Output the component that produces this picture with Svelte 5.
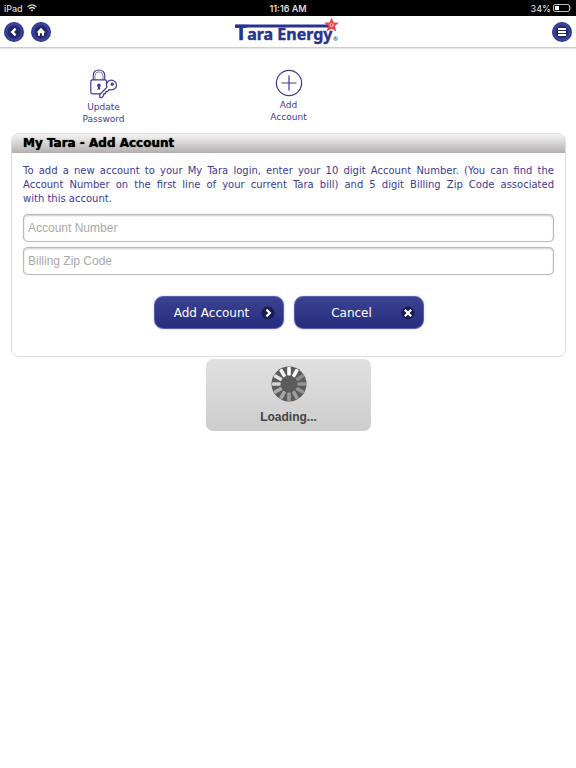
<script lang="ts">
    let accountNumber = $state('');
    let zipCode = $state('');

    // spinner bars, clockwise from the top
    const bars = [1, 1, 0.3, 0.35, 0.35, 0.4, 0.4, 0.45, 0.5, 0.75, 0.85, 0.95];

    function handleSubmit(e: SubmitEvent) {
        e.preventDefault();
    }
</script>

<div class="status-bar">
    <div class="status-left">
        <span>iPad</span>
        <svg width="10" height="8" viewBox="0 0 10 8" fill="none" stroke="#ddd" stroke-width="1.2">
            <path d="M0.6 3 Q5 -1.2 9.4 3" />
            <path d="M2.2 4.8 Q5 2.2 7.8 4.8" />
            <path d="M3.6 6 L5 7.6 L6.4 6 Q5 5 3.6 6Z" fill="#ddd" stroke="none" />
        </svg>
    </div>
    <span class="status-time">11:16 AM</span>
    <div class="status-right">
        <span>34%</span>
        <svg width="19" height="8" viewBox="0 0 19 8">
            <rect x="0.5" y="0.5" width="16" height="7" rx="1.5" fill="none" stroke="#bbb" />
            <rect x="2" y="2" width="4" height="4" fill="#fff" />
            <path d="M17.5 2.5 Q19 4 17.5 5.5Z" fill="#bbb" />
        </svg>
    </div>
</div>

<header class="header">
    <div class="header-side">
        <button class="round-btn" aria-label="Back">
            <svg width="20" height="20" viewBox="0 0 20 20">
                <path d="M11.6 6.6 L8.3 10 L11.6 13.4" fill="none" stroke="#fff" stroke-width="2.4" />
            </svg>
        </button>
        <button class="round-btn" aria-label="Home">
            <svg width="20" height="20" viewBox="0 0 20 20" fill="#fff">
                <path d="M10 5.8 L14.5 10.4 H13 V13.8 H11 V11.2 H9 V13.8 H7 V10.4 H5.5Z" />
            </svg>
        </button>
    </div>
    <a class="logo" href="#home" aria-label="Tara Energy">
        <svg width="106" height="28" viewBox="0 0 106 28">
            <rect x="0" y="6.5" width="93" height="3" fill="#27348b" />
            <text x="0" y="21.5" fill="#27348b" stroke="#27348b" stroke-width="0.4"><tspan class="logo-cap">T</tspan>ara Energy</text>
            <text class="logo-mark" x="98" y="23" fill="#27348b">®</text>
            <path d="M96.7 -0.3 L98.6 4.4 L103.8 4.7 L99.9 8.1 L101.3 13.6 L96.6 10.8 L91.6 13.4 L93.1 8.1 L89.2 4.6 L94.5 4.4Z" fill="#e4434b" />
            <circle cx="96.6" cy="7" r="1.6" fill="none" stroke="#fbd5d7" stroke-width="0.9" />
        </svg>
    </a>
    <div class="header-side end">
        <button class="round-btn" aria-label="Menu">
            <svg width="20" height="20" viewBox="0 0 20 20" fill="#fff">
                <rect x="6" y="6" width="8" height="2" />
                <rect x="6" y="9" width="8" height="2" />
                <rect x="6" y="12" width="8" height="2" />
            </svg>
        </button>
    </div>
</header>

<main>
    <nav class="shortcuts">
        <a href="#password">
            <svg width="28" height="30" viewBox="0 0 28 30" fill="none" stroke="#3d3a96" stroke-width="1.2">
                <path d="M3.2 11 V7 Q3.2 1 9 1 Q14.8 1 14.8 7 V11" />
                <path d="M5 11 V7.2 Q5 3 9 3 Q13 3 13 7.2 V11" stroke-width="0.7" />
                <path d="M16.6 15 V12.6 Q16.6 10.8 14.8 10.8 H2.6 Q0.8 10.8 0.8 12.6 V23 Q0.8 24.8 2.6 24.8 H10.4" />
                <path d="M7.4 20.5 L8.2 17.6 H9.6 L10.4 20.5Z" fill="#3d3a96" stroke="none" />
                <circle cx="8.9" cy="16.4" r="1.8" fill="#3d3a96" stroke="none" />
                <path d="M17 18.2 Q15.4 14.2 18.6 12 Q22 10 25 12.6 Q27.8 16 25.4 19.2 Q22.8 21.8 19.2 20.6 L17.6 22.4 L15.8 22.6 L15.6 24.4 L13.8 24.8 L13.6 26.6 L11.8 28.6 L9.8 28.4 L9.8 25.6Z" />
                <circle cx="22.2" cy="15.2" r="1.6" fill="#3d3a96" stroke="none" />
            </svg>
            <span>Update<br />Password</span>
        </a>
        <a href="#account">
            <svg width="28" height="28" viewBox="0 0 28 28" fill="none" stroke="#3d3a96" stroke-width="1.2">
                <circle cx="14" cy="14" r="12.6" />
                <path d="M14 6.5 V21.5 M6.5 14 H21.5" />
            </svg>
            <span>Add<br />Account</span>
        </a>
    </nav>

    <section class="panel">
        <h1>My Tara - Add Account</h1>
        <form onsubmit={handleSubmit}>
            <p>
                To add a new account to your My Tara login, enter your 10 digit Account Number. (You can find the
                Account Number on the first line of your current Tara bill) and 5 digit Billing Zip Code associated
                <span class="keep">with this account.</span>
            </p>
            <input type="text" placeholder="Account Number" aria-label="Account Number" bind:value={accountNumber} />
            <input type="text" placeholder="Billing Zip Code" aria-label="Billing Zip Code" bind:value={zipCode} />
            <div class="actions">
                <button class="action-btn" type="submit">
                    <span>Add Account</span>
                    <svg width="14" height="14" viewBox="0 0 14 14">
                        <circle cx="7" cy="7" r="6.5" fill="#191c50" />
                        <path d="M5.4 3.6 L8.8 7 L5.4 10.4" fill="none" stroke="#fff" stroke-width="2.2" />
                    </svg>
                </button>
                <button class="action-btn" type="button">
                    <span>Cancel</span>
                    <svg width="14" height="14" viewBox="0 0 14 14">
                        <circle cx="7" cy="7" r="6.5" fill="#191c50" />
                        <path d="M3.8 3.8 L10.2 10.2 M10.2 3.8 L3.8 10.2" stroke="#fff" stroke-width="2.2" />
                    </svg>
                </button>
            </div>
        </form>
    </section>

    <div class="loader" role="status">
        <svg width="36" height="36" viewBox="0 0 36 36">
            <circle cx="18" cy="18" r="17.5" fill="#5b5b5b" />
            {#each bars as opacity, i}
                <rect x="16.2" y="1" width="3.6" height="8.6" rx="1" fill="#fff" {opacity} transform="rotate({i * 30} 18 18)" />
            {/each}
        </svg>
        <span>Loading...</span>
    </div>
</main>

<style>
    :global(body) {
        background: #fff;
        font-family: Verdana, "DejaVu Sans", sans-serif;
        color: #3d3a96;
    }

    svg {
        display: block;
    }

    .status-bar {
        display: grid;
        grid-template-columns: 1fr auto 1fr;
        align-items: center;
        height: 16px;
        padding: 0 4px;
        box-sizing: border-box;
        background: #000;
        color: #ddd;
        font: 500 9px Inter, sans-serif;
    }

    .status-left,
    .status-right {
        display: flex;
        align-items: center;
        gap: 4px;
    }

    .status-right {
        justify-content: flex-end;
        gap: 2px;
    }

    .status-time {
        font-weight: 600;
    }

    .header {
        display: grid;
        grid-template-columns: 1fr auto 1fr;
        align-items: center;
        height: 32px;
        padding: 0 4px;
        box-sizing: border-box;
        border-bottom: 1px solid #ccc;
        box-shadow: 0 1px 1px #e8e8e8;
    }

    .header-side {
        display: flex;
        gap: 7px;
    }

    .header-side.end {
        justify-content: flex-end;
    }

    .round-btn {
        width: 20px;
        height: 20px;
        padding: 0;
        border: 0;
        border-radius: 50%;
        background: radial-gradient(circle, #20265f 0 5px, #2a3078 6px, #3d47ad 8px, #252b70 10px);
        cursor: pointer;
    }

    .logo text {
        font: 700 16px "Noto Sans", sans-serif;
    }

    .logo .logo-cap {
        font-size: 21px;
    }

    .logo .logo-mark {
        font-size: 6px;
    }

    main {
        padding: 21px 10px 0 11px;
    }

    .shortcuts {
        display: grid;
        grid-template-columns: repeat(3, 1fr);
        min-height: 64px;
    }

    .shortcuts a {
        display: flex;
        flex-direction: column;
        align-items: center;
        gap: 2px;
        color: #3d3a96;
        font-size: 9px;
        line-height: 12px;
        text-align: center;
        text-decoration: none;
    }

    .panel {
        border: 1px solid #dcdcdc;
        border-radius: 8px;
        overflow: hidden;
    }

    h1 {
        margin: 0;
        padding: 0 11px;
        background: linear-gradient(#f6f4f5, #b3afb1);
        color: #000;
        font-size: 12px;
        font-weight: 900;
        line-height: 19px;
        text-shadow: 0 0 1px #000;
    }

    form {
        padding: 11px 11px 27px;
    }

    p {
        margin: 0 0 8px;
        font-size: 10px;
        line-height: 14px;
        text-align: justify;
    }

    .keep {
        white-space: nowrap;
    }

    input {
        display: block;
        width: 100%;
        height: 28px;
        margin-bottom: 5px;
        padding: 0 4px;
        box-sizing: border-box;
        border: 1px solid #bbb;
        border-radius: 5px;
        background: #fff;
        box-shadow: inset 0 1px 2px #ccc, 0 0 1px #bbb;
        color: #333;
        font: 12px "Liberation Sans", sans-serif;
    }

    input::placeholder {
        color: #a9a9a9;
    }

    .actions {
        display: flex;
        justify-content: center;
        gap: 10px;
        padding-top: 16px;
    }

    .action-btn {
        display: flex;
        align-items: center;
        width: 130px;
        height: 33px;
        padding: 0 8px;
        border: 1px solid #5a60ad;
        border-radius: 9px;
        background: linear-gradient(#3b4291, #262d80);
        box-shadow: 0 0 2px #b9bbe0;
        color: #fff;
        font: 12px "DejaVu Sans", sans-serif;
        cursor: pointer;
    }

    .action-btn span {
        flex: 1;
    }

    .loader {
        display: flex;
        flex-direction: column;
        align-items: center;
        width: 165px;
        height: 72px;
        margin: 2px auto 0;
        padding-top: 7px;
        box-sizing: border-box;
        border-radius: 7px;
        background: linear-gradient(#e0e0e0, #cdcdcd);
        color: #444;
        font: bold 12px "Liberation Sans", sans-serif;
        gap: 8px;
    }
</style>
